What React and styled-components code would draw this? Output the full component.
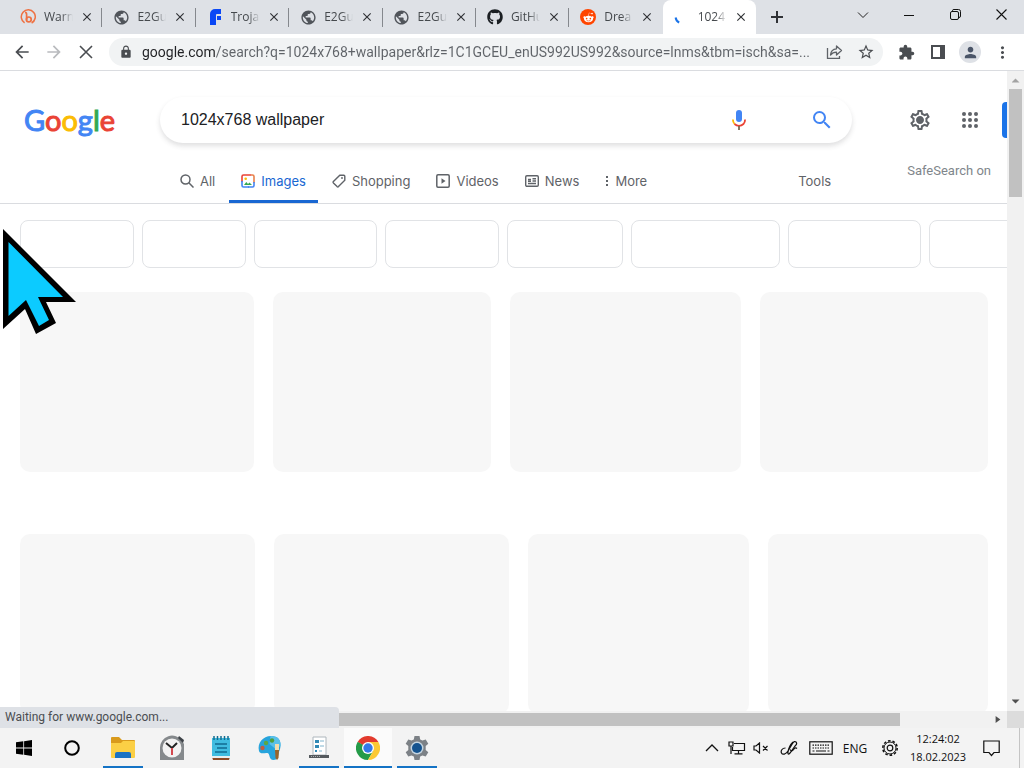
import React from "react";
import styled, { createGlobalStyle } from "styled-components";
import {
  MdArrowBack,
  MdArrowForward,
  MdClose,
  MdExtension,
  MdLock,
  MdMoreVert,
  MdOutlineSettings,
  MdPerson,
  MdPublic,
  MdSearch,
  MdStarBorder,
} from "react-icons/md";
import { FaGithub, FaRedditAlien } from "react-icons/fa";

const tabs = [
  { title: "Warn", icon: "bitly" },
  { title: "E2Gua", icon: "globe" },
  { title: "Troja", icon: "forum" },
  { title: "E2Gua", icon: "globe" },
  { title: "E2Gua", icon: "globe" },
  { title: "GitHu", icon: "github" },
  { title: "Drea", icon: "reddit" },
  { title: "1024", icon: "spinner", active: true },
];

const chips = [114, 104, 123, 114, 116, 149, 133, 120];

const rows = [
  [234, 218, 231, 228],
  [235, 235, 221, 220],
];

const url =
  "google.com/search?q=1024x768+wallpaper&rlz=1C1GCEU_enUS992US992&source=lnms&tbm=isch&sa=...";

function Favicon({ name }) {
  if (name === "globe") return <MdPublic size={17} color="#50545a" />;
  if (name === "github") return <FaGithub size={16} color="#1b1f23" />;
  if (name === "reddit")
    return (
      <RedditBadge>
        <FaRedditAlien size={11} color="#fff" />
      </RedditBadge>
    );
  if (name === "bitly")
    return (
      <svg width="16" height="16" viewBox="0 0 16 16" fill="none" stroke="#ee7143">
        <path d="M4.6 13.8A7 7 0 1 1 11.6 14" strokeWidth="1.5" />
        <path d="M5 3.400c1.400 0 1.600.8 1.600 2v6" strokeWidth="1.700" />
        <circle cx="8.8" cy="10.4" r="2.4" strokeWidth="1.700" />
      </svg>
    );
  if (name === "forum")
    return (
      <svg width="16" height="16" viewBox="0 0 16 16" fill="#0a47f5">
        <path d="M3 5a5 5 0 0 1 5-5h6v5h-4a1 1 0 0 0-1 1v10H3z" />
        <path d="M10 7h4v4h-4z" />
      </svg>
    );
  return (
    <svg width="16" height="16" viewBox="0 0 16 16" fill="none" stroke="#1a73e8" strokeWidth="2">
      <path d="M1.600 8.500a6.600 6.600 0 0 0 3.600 5" />
    </svg>
  );
}

function TabStrip() {
  return (
    <Strip>
      <TabList>
        {tabs.map((tab, i) => (
          <Tab key={i} $active={tab.active} $divider={i < 6}>
            <TabIcon>
              <Favicon name={tab.icon} />
            </TabIcon>
            <TabTitle>{tab.title}</TabTitle>
            <TabClose aria-label="Close tab">
              <MdClose size={14} />
            </TabClose>
          </Tab>
        ))}
      </TabList>
      <NewTab aria-label="New tab">
        <svg width="12" height="12" stroke="#303236" strokeWidth="2">
          <path d="M6 0v12M0 6h12" />
        </svg>
      </NewTab>
      <WindowControls>
        <WindowButton aria-label="Search tabs">
          <svg width="12" height="12" fill="none" stroke="#222">
            <path d="M1 3.500l5 5 5-5" />
          </svg>
        </WindowButton>
        <WindowButton aria-label="Minimize">
          <svg width="10" height="10" stroke="#111">
            <path d="M0 5.500h10" />
          </svg>
        </WindowButton>
        <WindowButton aria-label="Restore">
          <svg width="11" height="11" fill="none" stroke="#111">
            <rect x=".5" y="2.5" width="8" height="8" rx="1.5" />
            <path d="M2.500 2V1.500Q2.500.5 4 .5h4.500q2 0 2 2V7q0 1.500-1.500 1.500" />
          </svg>
        </WindowButton>
        <WindowButton aria-label="Close">
          <svg width="11" height="11" stroke="#111" strokeWidth="1.1">
            <path d="M.5.5l10 10M10.500.5l-10 10" />
          </svg>
        </WindowButton>
      </WindowControls>
    </Strip>
  );
}

function Toolbar() {
  return (
    <Bar>
      <BarButton aria-label="Back">
        <MdArrowBack size={20} />
      </BarButton>
      <BarButton aria-label="Forward" $dim>
        <MdArrowForward size={20} />
      </BarButton>
      <BarButton aria-label="Stop">
        <svg width="14" height="14" stroke="#4a4d51" strokeWidth="1.6">
          <path d="M1 1l12 12M13 1L1 13" />
        </svg>
      </BarButton>
      <Omnibox>
        <MdLock size={14} color="#4a4d51" />
        <UrlInput aria-label="Address" defaultValue={url} />
        <BarButton aria-label="Share">
          <svg width="17" height="16" fill="none" stroke="#5f6368" strokeWidth="1.3">
            <path d="M1.500 4v10.300h12V12" />
            <path d="M4.500 11c.3-4 2.500-6 6-6.200V2l5 4.500-5 4.500V8.200C8 8.200 6 9 4.500 11z" strokeLinejoin="round" />
          </svg>
        </BarButton>
        <BarButton aria-label="Bookmark">
          <MdStarBorder size={18} />
        </BarButton>
      </Omnibox>
      <BarButton aria-label="Extensions">
        <MdExtension size={17} />
      </BarButton>
      <BarButton aria-label="Side panel">
        <svg width="14" height="14" fill="none" stroke="#4a4d51" strokeWidth="2">
          <rect x="1" y="1" width="12" height="12" />
          <path d="M11 1v12" strokeWidth="4" />
        </svg>
      </BarButton>
      <BarButton aria-label="Profile">
        <Avatar>
          <MdPerson size={17} color="#4a5568" />
        </Avatar>
      </BarButton>
      <BarButton aria-label="Menu">
        <MdMoreVert size={19} />
      </BarButton>
    </Bar>
  );
}

function Mic() {
  return (
    <svg width="16" height="22" viewBox="0 0 16 22" fill="none" strokeWidth="1.8">
      <rect x="5" y="1" width="6" height="12" rx="3" fill="#4285f4" />
      <path d="M1.900 10.500c0 2 .6 3.300 1.700 4.500" stroke="#fbbc04" />
      <path d="M3.500 15c2.600 2.300 6.400 2.300 9 0 1-1.200 1.600-2.500 1.600-4.500" stroke="#ea4335" />
      <path d="M8 17v4" stroke="#7a6a50" />
    </svg>
  );
}

function Header() {
  return (
    <Top>
      <Logo href="#" aria-label="Google">
        <Letter $color="#4285f4">G</Letter>
        <Letter $color="#ea4335">o</Letter>
        <Letter $color="#fbbc05">o</Letter>
        <Letter $color="#4285f4">g</Letter>
        <Letter $color="#34a853">l</Letter>
        <Letter $color="#ea4335">e</Letter>
      </Logo>
      <SearchBox>
        <SearchInput aria-label="Search" defaultValue="1024x768 wallpaper" />
        <PlainButton aria-label="Search by voice">
          <Mic />
        </PlainButton>
        <PlainButton aria-label="Search" $wide>
          <MdSearch size={24} color="#4285f4" />
        </PlainButton>
      </SearchBox>
      <Actions>
        <PlainButton aria-label="Settings">
          <svg width="24" height="24" viewBox="0 0 24 24" fill="none">
            <MdOutlineSettings size={24} color="#5f6368" />
            <circle cx="12" cy="12" r="3" fill="#5f6368" />
          </svg>
        </PlainButton>
        <PlainButton aria-label="Google apps">
          <svg width="18" height="18" fill="#5f6368">
            {[3, 9, 15].map((y) =>
              [3, 9, 15].map((x) => <circle key={`${x}-${y}`} cx={x} cy={y} r="2" />)
            )}
          </svg>
        </PlainButton>
        <SignIn aria-label="Sign in" />
      </Actions>
    </Top>
  );
}

function Nav() {
  return (
    <NavBar>
      <NavList>
        <NavLink href="#">
          <svg width="14" height="14" fill="none" stroke="#5f6368" strokeWidth="1.5">
            <circle cx="5.5" cy="5.5" r="4.5" />
            <path d="M8.800 8.800l4.700 4.700" />
          </svg>
          All
        </NavLink>
        <NavLink href="#" $active>
          <svg width="14" height="14" fill="none" strokeWidth="1.6">
            <path d="M1 8V2.500Q1 1 2.500 1H10" stroke="#ea4335" />
            <path d="M10 1h1.500Q13 1 13 2.500V9" stroke="#e8804a" />
            <path d="M13 8v3.500q0 1.500-1.500 1.500H7" stroke="#4285f4" />
            <path d="M8 13H2.500Q1 13 1 11.500V7" stroke="#4285f4" />
            <path d="M3 11l2.300-3 1.700 2 1.500-1.600L11 11z" fill="#34a853" />
            <circle cx="4.7" cy="4.7" r="1.3" fill="#fbbc04" />
          </svg>
          Images
        </NavLink>
        <NavLink href="#">
          <svg width="14" height="14" fill="none" stroke="#5f6368" strokeWidth="1.4">
            <path d="M7.800 1.200h4q1 0 1 1v4L6.500 12.600q-.7.6-1.400 0L1.400 8.900q-.6-.7 0-1.400z" />
            <circle cx="10" cy="4" r=".9" fill="#5f6368" stroke="none" />
          </svg>
          Shopping
        </NavLink>
        <NavLink href="#">
          <svg width="14" height="14" fill="none" stroke="#5f6368" strokeWidth="1.5">
            <rect x=".8" y=".8" width="12.4" height="12.4" rx="1.2" />
            <path d="M5.500 4.300v5.400L9.500 7z" fill="#5f6368" stroke="none" />
          </svg>
          Videos
        </NavLink>
        <NavLink href="#">
          <svg width="14" height="14" fill="none" stroke="#5f6368" strokeWidth="1.4">
            <rect x=".7" y="1.7" width="12.6" height="10.6" rx="1.2" />
            <path d="M3 5.500h3M3 7.200h3M7.500 4.700H11M7.500 7H11M3 9.500h8" />
          </svg>
          News
        </NavLink>
        <NavLink href="#">
          <svg width="4" height="12" fill="#5f6368">
            <path d="M1 1h2v2H1zM1 5h2v2H1zM1 9h2v2H1z" />
          </svg>
          More
        </NavLink>
      </NavList>
      <Tools>Tools</Tools>
      <SafeSearch href="#">SafeSearch on</SafeSearch>
    </NavBar>
  );
}

function Taskbar() {
  return (
    <Tasks>
      <TaskButton aria-label="Start">
        <svg width="16" height="16" fill="#000">
          <path d="M0 2.300L7.300 1.300V7.600H0zM8.100 1.200L16 0v7.600H8.100zM0 8.400h7.300v6.300L0 13.700zM8.100 8.400H16V16l-7.900-1.200z" />
        </svg>
      </TaskButton>
      <TaskButton aria-label="Cortana">
        <svg width="18" height="18" fill="none" stroke="#000" strokeWidth="2">
          <circle cx="9" cy="9" r="6.8" />
        </svg>
      </TaskButton>
      <Pinned>
        <TaskButton aria-label="File Explorer" $open>
          <svg width="26" height="24">
            <path d="M1 2q0-1 1-1h7l3 3h12q1 0 1 1v4H1z" fill="#d99a1c" />
            <path d="M1 7h10l2-2h11q1 0 1 1v15q0 1-1 1H2q-1 0-1-1z" fill="#fbcf45" />
            <path d="M5 22v-4q0-2 2-2h12q2 0 2 2v4z" fill="#1a72c4" />
          </svg>
        </TaskButton>
        <TaskButton aria-label="Clock">
          <svg width="26" height="26" fill="none">
            <path d="M1 25V13A12 12 0 0 1 23 6l2 3v16z" fill="#85898c" />
            <path d="M20 1l5 4-1 3-5-5z" fill="#3d4247" />
            <circle cx="13" cy="13" r="9.5" fill="#f2f2f2" />
            <path d="M7 8l6 5 5-5" stroke="#222" strokeWidth="2" />
            <path d="M13 13v7" stroke="#d4484e" strokeWidth="2" />
          </svg>
        </TaskButton>
        <TaskButton aria-label="Notepad">
          <svg width="20" height="26">
            <path d="M1 3h18v19H1z" fill="#40bce0" />
            <path d="M1 22h18l-1 3H2z" fill="#8c4a26" />
            <path d="M1 21h18v2H1z" fill="#e7eef0" />
            <path d="M3 1v4M6.500 1v4M10 1v4M13.500 1v4M17 1v4" stroke="#126d91" strokeWidth="1.5" />
            <path d="M4 9h12M6 13h10M4 17h12" stroke="#116b91" strokeWidth="1.6" />
          </svg>
        </TaskButton>
        <TaskButton aria-label="Paint">
          <svg width="26" height="26">
            <path
              d="M2 16C0 8 6 1 14 1c7 0 10 4 9.500 10-.3 4-1.500 5-2 8s-1 6-5 6c-5 0-3-6-6-7-3-.6-7 2-8.500-2z"
              fill="#27a4dc"
            />
            <path d="M14 1c7 0 10 4 9.500 10l-5 3-6-5 1-8z" fill="#58c0ea" />
            <circle cx="5.5" cy="13" r="2.2" fill="#c45b42" />
            <circle cx="9" cy="8" r="2.200" fill="#5da744" />
            <circle cx="15" cy="5.5" r="2.200" fill="#4e9e40" />
            <path d="M18 9h4v6h-4z" fill="#f1dcae" />
            <path d="M18 15h4l-.5 8-1.500 2-1.500-2z" fill="#99642a" />
          </svg>
        </TaskButton>
        <TaskButton aria-label="Setup script" $open>
          <svg width="22" height="24" fill="none">
            <path d="M5 1h13v18H5z" fill="#fff" stroke="#aeb7bd" />
            <path d="M7 4h4v3H7zM7 9h4v3H7zM7 14h2v2H7z" fill="#3189b5" />
            <path d="M12 5h4M12 10h4M11 15h3" stroke="#7fb4cd" />
            <path d="M1 19h20v3H1z" fill="#555a5e" />
            <path d="M3 20.500h10" stroke="#a9adb0" strokeDasharray="1 1" />
          </svg>
        </TaskButton>
        <TaskButton aria-label="Chrome" $open $current>
          <svg width="24" height="24" viewBox="0 0 24 24">
            <path d="M12 12L1.600 6A12 12 0 0 1 22.400 6z" fill="#e33b2e" />
            <path d="M12 12v12A12 12 0 0 1 1.600 6z" fill="#259b49" />
            <path d="M1.600 6L6.800 15 12 12z" fill="#259b49" />
            <path d="M12 24l5.200-9H7z" fill="#259b49" />
            <path d="M17.200 15L12 24A12 12 0 0 0 22.400 6H12z" fill="#fcc934" />
            <circle cx="12" cy="12" r="6" fill="#fff" />
            <circle cx="12" cy="12" r="4.7" fill="#3479e8" />
          </svg>
        </TaskButton>
        <TaskButton aria-label="Settings" $open>
          <svg width="24" height="24" viewBox="0 0 24 24">
            <path
              d="M9.500 0h5l.7 3.400 2.200 1.200 3.300-1.200 2.600 4.400-2.600 2.300v3.800l2.600 2.300-2.600 4.400-3.300-1.200-2.200 1.200-.7 3.400h-5l-.7-3.400-2.200-1.200-3.300 1.200-2.600-4.400 2.600-2.300v-3.800L.7 7.800l2.600-4.400 3.300 1.200 2.200-1.200z"
              fill="#7c8186"
            />
            <circle cx="12" cy="12" r="6.5" fill="#c3d4e0" />
            <circle cx="12" cy="12" r="5" fill="#14538f" />
          </svg>
        </TaskButton>
      </Pinned>
      <Tray>
        <TrayButton aria-label="Show hidden icons" $width={24}>
          <svg width="14" height="8" fill="none" stroke="#111" strokeWidth="1.3">
            <path d="M1 7l6-6 6 6" />
          </svg>
        </TrayButton>
        <TrayButton aria-label="Network" $width={26}>
          <svg width="18" height="14" fill="none" stroke="#111" strokeWidth="1.2">
            <path d="M6 2.500h10.500v7H4.500V6M10.500 9.500v3M6.500 12.900h8" />
            <path d="M1 1h4v4H1zM3 5v8" />
          </svg>
        </TrayButton>
        <TrayButton aria-label="Volume" $width={22}>
          <svg width="16" height="12" fill="none" stroke="#111" strokeWidth="1.2">
            <path d="M1 4v4h2l3.500 3V1L3 4zM10 4l4.500 4.500M14.500 4L10 8.500" />
          </svg>
        </TrayButton>
        <TrayButton aria-label="Windows Ink" $width={34}>
          <svg width="18" height="16" fill="none" stroke="#111" strokeWidth="1.2">
            <path d="M5.500 8C2 8 .500 11 1.500 13s4.500 1.500 6.500-2l4.500-7.500Q14.500.5 16 2t-.5 3.500L10 13q-2.500 2.500-2-1C8.500 8.500 11 4 13 2" />
            <path d="M10 9.500c1.500 2.500 3 1 4-.5s2-1.500 3-.5" />
          </svg>
        </TrayButton>
        <TrayButton aria-label="Touch keyboard" $width={30}>
          <svg width="24" height="14" fill="none" stroke="#111" strokeWidth="1.2">
            <rect x=".8" y=".8" width="22.4" height="12.4" />
            <path d="M3.500 4.200h17M3.500 7h17" strokeDasharray="1.5 1" />
            <path d="M3.500 10h2M7 10h10M18.500 10h2" />
          </svg>
        </TrayButton>
        <TrayButton $width={38}>ENG</TrayButton>
        <TrayButton aria-label="Options" $width={31}>
          <svg width="18" height="18" viewBox="0 0 18 18" fill="none" stroke="#111">
            <circle cx="9" cy="9" r="7.2" strokeWidth="1.6" strokeDasharray="2.6 1.924" />
            <circle cx="9" cy="9" r="6" />
            <circle cx="9" cy="9" r="2.8" strokeWidth="1.2" />
          </svg>
        </TrayButton>
        <Clock>
          <span>12:24:02</span>
          <span>18.02.2023</span>
        </Clock>
        <TrayButton aria-label="Notifications" $width={40}>
          <svg width="17" height="17" fill="none" stroke="#111" strokeWidth="1.2">
            <path d="M.8 1h15.400v11.500H11L8.500 15.500 6 12.500H.8z" />
          </svg>
        </TrayButton>
        <ShowDesktop aria-label="Show desktop" />
      </Tray>
    </Tasks>
  );
}

function App() {
  return (
    <Screen>
      <GlobalStyle />
      <TabStrip />
      <Toolbar />
      <Viewport>
        <Page>
          <Header />
          <Nav />
          <Chips>
            {chips.map((width, i) => (
              <Chip key={i} $width={width} aria-label="Suggestion" />
            ))}
          </Chips>
          <Results>
            {rows.map((row, i) => (
              <Row key={i}>
                {row.map((size, j) => (
                  <Card key={j} $size={size} />
                ))}
              </Row>
            ))}
          </Results>
        </Page>
        <VerticalBar>
          <Arrow $dir="up" />
          <VerticalThumb />
          <Arrow $dir="down" />
        </VerticalBar>
        <HorizontalBar>
          <HorizontalThumb />
          <Arrow $dir="right" />
        </HorizontalBar>
        <Corner />
        <Status>Waiting for www.google.com...</Status>
      </Viewport>
      <Taskbar />
      <Pointer width="76" height="108" viewBox="0 228 76 108">
        <path d="M3 229l73 73H46l10 21-20 11-11-25L3 329z" fill="#000" />
        <path d="M8.500 242L63 297H38l11 23-10 6-13-26L8.500 316z" fill="#0ccbff" />
      </Pointer>
    </Screen>
  );
}

const GlobalStyle = createGlobalStyle`
  * {
    box-sizing: border-box;
  }

  body {
    margin: 0;
    overflow: hidden;
    background: #fff;
    font-family: "Open Sans", "Noto Sans", sans-serif;
  }

  button,
  input {
    margin: 0;
    padding: 0;
    border: 0;
    outline: 0;
    background: none;
    font-family: inherit;
  }

  a {
    text-decoration: none;
  }

  svg {
    flex-shrink: 0;
  }
`;

const Screen = styled.div`
  display: flex;
  flex-direction: column;
  height: 100vh;
`;

const Strip = styled.div`
  display: flex;
  height: 34px;
  padding-left: 9px;
  background: #dee1e6;
`;

const TabList = styled.div`
  display: flex;
  flex: 0 1 747px;
`;

const Tab = styled.div`
  position: relative;
  display: flex;
  align-items: center;
  flex: 1 1 0;
  height: 34px;
  padding-left: 11px;
  border-radius: 8px 8px 0 0;
  background: ${({ $active }) => ($active ? "#fff" : "transparent")};

  &::after {
    content: "";
    display: ${({ $divider }) => ($divider ? "block" : "none")};
    position: absolute;
    right: 0;
    top: 8px;
    width: 1px;
    height: 19px;
    background: #85888d;
  }
`;

const TabIcon = styled.span`
  display: flex;
  align-items: center;
  justify-content: center;
  width: 16px;
  height: 16px;
`;

const RedditBadge = styled.span`
  display: flex;
  align-items: center;
  justify-content: center;
  width: 16px;
  height: 16px;
  flex-shrink: 0;
  border-radius: 50%;
  background: #ff4500;
`;

const TabTitle = styled.span`
  width: 29px;
  margin-left: 8px;
  white-space: nowrap;
  font-size: 12px;
  line-height: 16px;
  color: #45494d;
  mask-image: linear-gradient(to right, #000 60%, transparent);
`;

const TabClose = styled.button`
  display: flex;
  align-items: center;
  justify-content: center;
  width: 16px;
  height: 16px;
  margin-left: 6px;
  color: #303236;
`;

const NewTab = styled.button`
  display: flex;
  align-items: center;
  justify-content: center;
  width: 28px;
  margin-left: 7px;
`;

const WindowControls = styled.div`
  display: flex;
  height: 29px;
  margin-left: auto;
`;

const WindowButton = styled.button`
  display: flex;
  align-items: center;
  justify-content: center;
  width: 46px;
`;

const Bar = styled.div`
  display: flex;
  align-items: center;
  height: 37px;
  padding: 0 6px;
  border-bottom: 1px solid #dadce0;
  background: #fff;
`;

const BarButton = styled.button`
  display: flex;
  align-items: center;
  justify-content: center;
  width: 32px;
  height: 28px;
  flex-shrink: 0;
  color: ${({ $dim }) => ($dim ? "#b9bbbe" : "#4a4d51")};
`;

const Omnibox = styled.div`
  display: flex;
  align-items: center;
  flex: 1;
  min-width: 0;
  height: 28px;
  margin: 0 7px;
  padding: 0 1px 0 10px;
  border-radius: 14px;
  background: #f1f3f4;
`;

const UrlInput = styled.input`
  flex: 1;
  min-width: 0;
  height: 20px;
  margin-left: 9px;
  font-family: Roboto, sans-serif;
  font-size: 14px;
  line-height: 20px;
  color: #5f6368;
  background: linear-gradient(to right, #202124 73px, #5f6368 73px);
  background-clip: text;
  -webkit-text-fill-color: transparent;
`;

const Avatar = styled.span`
  display: flex;
  align-items: center;
  justify-content: center;
  width: 22px;
  height: 22px;
  border-radius: 50%;
  background: #dee1e6;
`;

const Viewport = styled.div`
  position: relative;
  display: grid;
  grid-template-columns: minmax(0, 1fr) 17px;
  grid-template-rows: minmax(0, 1fr) 17px;
  flex: 1;
  min-height: 0;
`;

const Page = styled.main`
  overflow: hidden;
  background: #fff;
`;

const Top = styled.header`
  display: flex;
  align-items: center;
  height: 98px;
  padding-left: 24px;
`;

const Logo = styled.a`
  width: 136px;
  flex-shrink: 0;
  font-family: Lato, sans-serif;
  font-size: 29px;
  line-height: 40px;
`;

const Letter = styled.span`
  color: ${({ $color }) => $color};
  -webkit-text-stroke: 1px ${({ $color }) => $color};
`;

const SearchBox = styled.form`
  display: flex;
  align-items: center;
  flex: 0 1 692px;
  min-width: 0;
  height: 46px;
  padding-left: 21px;
  border-radius: 23px;
  background: #fff;
  box-shadow: 0 3px 5px rgba(64, 60, 67, 0.16);
`;

const SearchInput = styled.input`
  flex: 1;
  min-width: 0;
  font-family: "Liberation Sans", Arial, sans-serif;
  font-size: 16px;
  line-height: 24px;
  color: #202124;
`;

const PlainButton = styled.button`
  display: flex;
  align-items: center;
  justify-content: center;
  width: ${({ $wide }) => ($wide ? 88 : 50)}px;
  height: 40px;
  padding-left: ${({ $wide }) => ($wide ? 28 : 0)}px;
  flex-shrink: 0;
`;

const Actions = styled.div`
  display: flex;
  align-items: center;
  margin-left: auto;
`;

/* runs on past the right edge of the page */
const SignIn = styled.button`
  width: 96px;
  height: 36px;
  margin: 0 -91px 0 7px;
  flex-shrink: 0;
  border-radius: 4px;
  background: #1a73e8;
`;

const NavBar = styled.nav`
  display: flex;
  height: 35px;
  padding: 0 16px 0 168px;
  border-bottom: 1px solid #dadce0;
`;

const NavList = styled.div`
  display: flex;
  gap: 2px;
`;

const NavLink = styled.a`
  display: flex;
  align-items: center;
  gap: 6px;
  height: 34px;
  padding: 0 12px 8px;
  border-bottom: 3px solid ${({ $active }) => ($active ? "#1967d2" : "transparent")};
  font-family: Inter, sans-serif;
  font-size: 13px;
  line-height: 16px;
  color: ${({ $active }) => ($active ? "#1967d2" : "#5f6368")};
`;

const Tools = styled.button`
  height: 24px;
  margin-left: auto;
  font-family: Inter, sans-serif;
  font-size: 13px;
  line-height: 24px;
  color: #5f6368;
`;

const SafeSearch = styled.a`
  margin-left: 76px;
  font-family: Roboto, sans-serif;
  font-size: 13px;
  line-height: 4px;
  color: #80868b;
`;

const Chips = styled.div`
  display: flex;
  gap: 8px;
  padding: 16px 0 24px 20px;
`;

const Chip = styled.button`
  width: ${({ $width }) => $width}px;
  height: 48px;
  flex-shrink: 0;
  border: 1px solid #e1e3e6;
  border-radius: 8px;
`;

const Results = styled.div`
  display: flex;
  flex-direction: column;
  gap: 62px;
  padding: 0 19px 0 20px;
`;

const Row = styled.div`
  display: flex;
  gap: 19px;
`;

const Card = styled.div`
  flex: ${({ $size }) => $size} 1 0;
  height: 180px;
  border-radius: 10px;
  background: #f7f7f7;
`;

const VerticalBar = styled.div`
  display: flex;
  flex-direction: column;
  align-items: center;
  padding: 6px 0;
  background: #f1f1f1;
`;

const VerticalThumb = styled.div`
  width: 13px;
  height: 108px;
  margin: 5px 0 auto;
  background: #c1c1c1;
`;

const HorizontalBar = styled.div`
  display: flex;
  align-items: center;
  justify-content: space-between;
  padding-right: 5px;
  background: #f1f1f1;
`;

const HorizontalThumb = styled.div`
  width: 900px;
  height: 13px;
  flex-shrink: 1;
  background: #c1c1c1;
`;

const arrowShape = {
  up: "polygon(0 80%, 50% 20%, 100% 80%)",
  down: "polygon(0 20%, 50% 80%, 100% 20%)",
  right: "polygon(20% 0, 80% 50%, 20% 100%)",
};

const Arrow = styled.span`
  width: 8px;
  height: 7px;
  flex-shrink: 0;
  background: ${({ $dir }) => ($dir === "up" ? "#a3a3a3" : "#505050")};
  clip-path: ${({ $dir }) => arrowShape[$dir]};
`;

const Corner = styled.div`
  background: #dcdcdc;
`;

const Status = styled.div`
  position: absolute;
  left: 0;
  bottom: 0;
  width: 339px;
  height: 21px;
  padding-left: 5px;
  border-radius: 0 4px 0 0;
  background: #dee1e6;
  font-family: Roboto, sans-serif;
  font-size: 12px;
  line-height: 21px;
  color: #4a4d51;
`;

const Tasks = styled.footer`
  display: flex;
  height: 40px;
  background: #f3f3f3;
`;

const Pinned = styled.div`
  display: flex;
  gap: 1px;
  margin-left: 3px;
`;

const TaskButton = styled.button`
  display: flex;
  align-items: center;
  justify-content: center;
  position: relative;
  width: 48px;
  height: 40px;
  background: ${({ $current }) => ($current ? "#fbfbfb" : "transparent")};

  &::after {
    content: "";
    display: ${({ $open }) => ($open ? "block" : "none")};
    position: absolute;
    bottom: 0;
    left: ${({ $current }) => ($current ? 0 : 4)}px;
    right: ${({ $current }) => ($current ? 0 : 4)}px;
    height: 2px;
    background: #1473c5;
  }
`;

const Tray = styled.div`
  display: flex;
  align-items: center;
  margin-left: auto;
`;

const TrayButton = styled.button`
  display: flex;
  align-items: center;
  justify-content: center;
  width: ${({ $width }) => $width}px;
  height: 40px;
  font-size: 12px;
  color: #111;
`;

const Clock = styled.div`
  display: flex;
  flex-direction: column;
  align-items: center;
  width: 66px;
  font-size: 11px;
  line-height: 18px;
  color: #111;
`;

const ShowDesktop = styled.button`
  width: 5px;
  height: 40px;
  margin-left: 8px;
  border-left: 1px solid #c4c4c4;
`;

const Pointer = styled.svg`
  position: absolute;
  left: 0;
  top: 228px;
  pointer-events: none;
`;

export default App;
